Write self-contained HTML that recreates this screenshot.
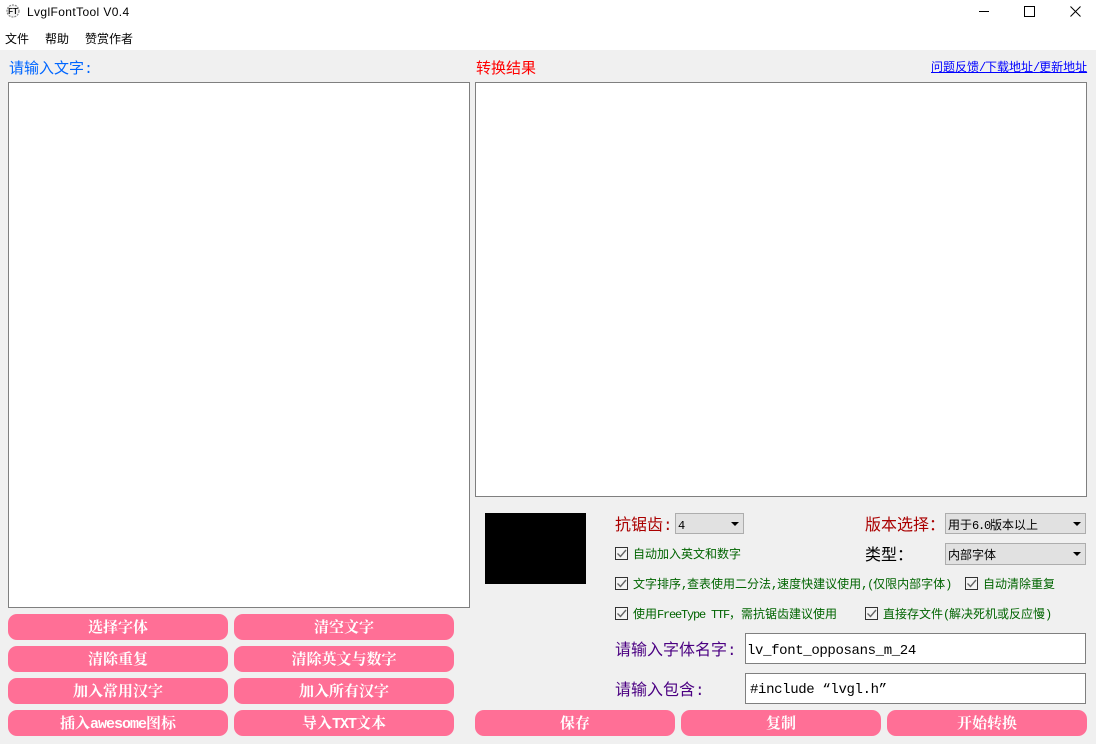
<!DOCTYPE html>
<html lang="zh">
<head>
<meta charset="utf-8">
<title>LvglFontTool V0.4</title>
<style>
html,body{margin:0;padding:0;width:1096px;height:744px;overflow:hidden;background:#f0f0f0}
body{position:relative;font-family:"Liberation Sans","WenQuanYi Zen Hei","Noto Sans CJK SC",sans-serif;color:#000}
.a{position:absolute;white-space:nowrap}
.m{font-family:"Liberation Mono",monospace;letter-spacing:-.1em}
.box{position:absolute;box-sizing:border-box;background:#fff;border:1px solid #7f7f7f}
.btn{position:absolute;box-sizing:border-box;height:26px;background:#ff6f96;border-radius:9px;color:#fff;font-family:"Liberation Mono","Noto Serif CJK SC",serif;font-weight:700;font-size:15px;line-height:30px;text-align:center;white-space:nowrap}
.btn span{letter-spacing:-1px}
.combo{position:absolute;box-sizing:border-box;background:#e1e1e1;border:1px solid #adadad;font-size:12px;line-height:21px;padding-left:2px;font-family:"WenQuanYi Zen Hei","Noto Sans CJK SC",sans-serif;white-space:nowrap}
.combo:after{content:"";position:absolute;right:4px;top:8px;border-left:4px solid transparent;border-right:4px solid transparent;border-top:4px solid #000}
.cb{position:absolute;box-sizing:border-box;width:13px;height:13px;background:#f4f4f4;border:1px solid #333}
.cb svg{position:absolute;left:0;top:0}
.g{color:#006400;font-size:12px;line-height:14px;font-family:"WenQuanYi Zen Hei","Noto Sans CJK SC",sans-serif}
.lab{font-size:16px;line-height:20px;font-family:"WenQuanYi Zen Hei","Noto Sans CJK SC",sans-serif}
.in{font-family:"Liberation Mono",monospace;font-size:14px;line-height:16px;letter-spacing:-.36px}
</style>
</head>
<body>
<div class="a" style="left:0;top:0;width:1096px;height:50px;background:#fff"></div>

<svg class="a" style="left:6px;top:4px" width="14" height="14" viewBox="0 0 14 14"><circle cx="7" cy="7" r="6" fill="#f4f4f4" stroke="#888" stroke-width="1.2" stroke-dasharray="2 1"/><text x="7" y="10" font-family="Liberation Sans" font-size="8" font-weight="700" text-anchor="middle" fill="#111">FT</text></svg>
<div class="a" style="left:27px;top:4px;font-size:12px;line-height:16px;font-family:'Liberation Sans',sans-serif;letter-spacing:.38px">LvglFontTool V0.4</div>

<svg class="a" style="left:979px;top:5px" width="12" height="12"><path d="M0 6.5H10" stroke="#000" stroke-width="1"/></svg>
<svg class="a" style="left:1024px;top:6px" width="12" height="12"><rect x=".5" y=".5" width="10" height="10" fill="none" stroke="#000"/></svg>
<svg class="a" style="left:1070px;top:6px" width="12" height="12"><path d="M.5 .5L10.5 10.5M10.5 .5L.5 10.5" stroke="#000" stroke-width="1"/></svg>

<div class="a" style="left:5px;top:31px;font-size:12px;line-height:16px">文件</div>
<div class="a" style="left:45px;top:31px;font-size:12px;line-height:16px">帮助</div>
<div class="a" style="left:85px;top:31px;font-size:12px;line-height:16px">赞赏作者</div>

<div class="a lab" style="left:9px;top:58px;font-size:15px;color:#0066ff">请输入文字<span class="m">:</span></div>
<div class="a lab" style="left:476px;top:58px;font-size:15px;color:#ff0000">转换结果</div>
<div class="a" style="left:931px;top:59px;font-size:12px;line-height:16px;color:#0000ff;text-decoration:underline">问题反馈<span class="m">/</span>下载地址<span class="m">/</span>更新地址</div>

<div class="box" style="left:8px;top:82px;width:462px;height:526px"></div>
<div class="box" style="left:475px;top:82px;width:612px;height:415px"></div>
<div class="a" style="left:485px;top:513px;width:101px;height:71px;background:#000"></div>

<div class="a lab" style="left:615px;top:513px;color:#aa0000">抗锯齿<span class="m">:</span></div>
<div class="combo" style="left:675px;top:513px;width:69px;height:21px"><span class="m">4</span></div>
<div class="a lab" style="left:865px;top:513px;color:#aa0000">版本选择：</div>
<div class="combo" style="left:945px;top:513px;width:141px;height:21px">用于<span class="m">6.0</span>版本以上</div>
<div class="a lab" style="left:865px;top:543px">类型：</div>
<div class="combo" style="left:945px;top:543px;width:141px;height:22px">内部字体</div>

<div class="cb" style="left:615px;top:547px"><svg width="11" height="11"><path d="M1.5 5.5L4.5 8.5L10 2" fill="none" stroke="#666" stroke-width="1.4"/></svg></div>
<div class="a g" style="left:633px;top:547px">自动加入英文和数字</div>
<div class="cb" style="left:615px;top:577px"><svg width="11" height="11"><path d="M1.5 5.5L4.5 8.5L10 2" fill="none" stroke="#666" stroke-width="1.4"/></svg></div>
<div class="a g" style="left:633px;top:577px">文字排序<span class="m">,</span>查表使用二分法<span class="m">,</span>速度快建议使用<span class="m">,(</span>仅限内部字体<span class="m">)</span></div>
<div class="cb" style="left:965px;top:577px"><svg width="11" height="11"><path d="M1.5 5.5L4.5 8.5L10 2" fill="none" stroke="#666" stroke-width="1.4"/></svg></div>
<div class="a g" style="left:983px;top:577px">自动清除重复</div>
<div class="cb" style="left:615px;top:607px"><svg width="11" height="11"><path d="M1.5 5.5L4.5 8.5L10 2" fill="none" stroke="#666" stroke-width="1.4"/></svg></div>
<div class="a g" style="left:633px;top:607px">使用<span class="m">FreeType TTF</span>，需抗锯齿建议使用</div>
<div class="cb" style="left:865px;top:607px"><svg width="11" height="11"><path d="M1.5 5.5L4.5 8.5L10 2" fill="none" stroke="#666" stroke-width="1.4"/></svg></div>
<div class="a g" style="left:883px;top:607px">直接存文件<span class="m">(</span>解决死机或反应慢<span class="m">)</span></div>

<div class="a lab" style="left:615px;top:638px;color:#4b0082">请输入字体名字<span class="m">:</span></div>
<div class="box" style="left:745px;top:633px;width:341px;height:31px"></div>
<div class="a in" style="left:747px;top:643px">lv_font_opposans_m_24</div>
<div class="a lab" style="left:615px;top:678px;color:#4b0082">请输入包含<span class="m">:</span></div>
<div class="box" style="left:745px;top:673px;width:341px;height:31px"></div>
<div class="a in" style="left:750px;top:682px">#include “lvgl.h”</div>

<div class="btn" style="left:8px;top:614px;width:220px">选择字体</div>
<div class="btn" style="left:234px;top:614px;width:220px">清空文字</div>
<div class="btn" style="left:8px;top:646px;width:220px">清除重复</div>
<div class="btn" style="left:234px;top:646px;width:220px">清除英文与数字</div>
<div class="btn" style="left:8px;top:678px;width:220px">加入常用汉字</div>
<div class="btn" style="left:234px;top:678px;width:220px">加入所有汉字</div>
<div class="btn" style="left:8px;top:710px;width:220px">插入<span>awesome</span>图标</div>
<div class="btn" style="left:234px;top:710px;width:220px">导入<span>TXT</span>文本</div>
<div class="btn" style="left:475px;top:710px;width:200px">保存</div>
<div class="btn" style="left:681px;top:710px;width:200px">复制</div>
<div class="btn" style="left:887px;top:710px;width:200px">开始转换</div>
</body>
</html>
